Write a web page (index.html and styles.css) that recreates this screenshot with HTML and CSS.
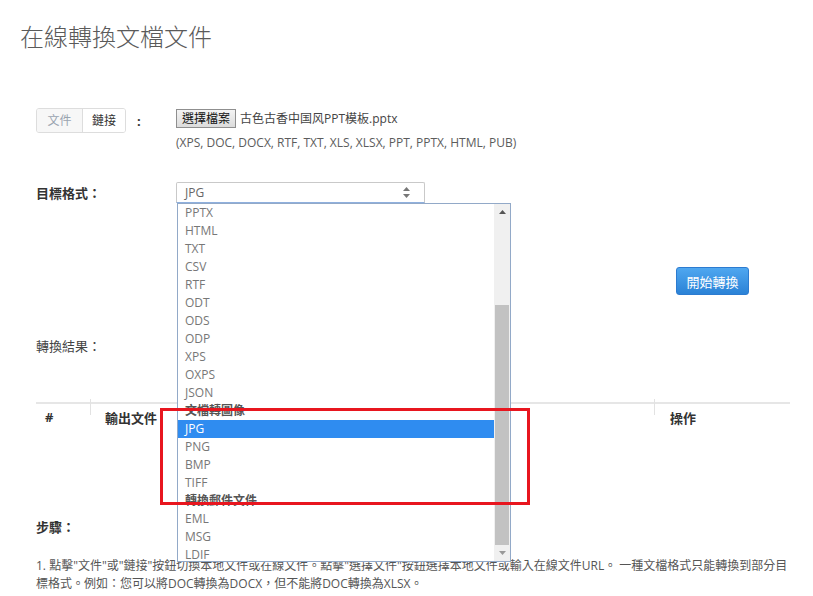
FILE: index.html
```html
<!DOCTYPE html>
<html lang="zh-Hant">

<head>
  <meta charset="UTF-8">
  <meta name="viewport" content="width=device-width, initial-scale=1.0">
  <title>在線轉換文檔文件</title>
  <link rel="stylesheet" href="styles.css">
</head>

<body>
  <h1 class="page-title">在線轉換文檔文件</h1>

  <div class="converter">
    <div class="form-row source-row">
      <div class="label-col">
        <div class="tabs">
          <span class="tab active">文件</span>
          <span class="tab">鏈接</span>
        </div>
        <span class="colon">:</span>
      </div>
      <div class="field-col">
        <div class="file-line">
          <span class="file-btn">選擇檔案</span>
          <span class="file-name">古色古香中国风PPT模板.pptx</span>
        </div>
        <div class="hint">(XPS, DOC, DOCX, RTF, TXT, XLS, XLSX, PPT, PPTX, HTML, PUB)</div>
      </div>
    </div>

    <div class="form-row target-row">
      <div class="label-col">
        <span class="label">目標格式：</span>
      </div>
      <div class="field-col">
        <div class="select-wrap">
          <div class="select-box">
            <span>JPG</span>
            <svg class="select-arrows" width="7" height="11" viewBox="0 0 7 11">
              <path d="M3.5 0 L7 4 L0 4 Z M3.5 11 L7 7 L0 7 Z" fill="#777" />
            </svg>
          </div>

          <!-- open option list of the select -->
          <div class="dropdown">
            <ul class="options">
              <li>PPTX</li>
              <li>HTML</li>
              <li>TXT</li>
              <li>CSV</li>
              <li>RTF</li>
              <li>ODT</li>
              <li>ODS</li>
              <li>ODP</li>
              <li>XPS</li>
              <li>OXPS</li>
              <li>JSON</li>
              <li class="group">文檔轉圖像</li>
              <li class="selected">JPG</li>
              <li>PNG</li>
              <li>BMP</li>
              <li>TIFF</li>
              <li class="group">轉換郵件文件</li>
              <li>EML</li>
              <li>MSG</li>
              <li>LDIF</li>
            </ul>
            <div class="scrollbar">
              <div class="scroll-btn">
                <svg width="7" height="4" viewBox="0 0 7 4"><path d="M3.5 0 L7 4 L0 4 Z" fill="#555" /></svg>
              </div>
              <div class="scroll-track">
                <div class="scroll-thumb"></div>
              </div>
              <div class="scroll-btn">
                <svg width="7" height="4" viewBox="0 0 7 4"><path d="M0 0 L7 0 L3.5 4 Z" fill="#999" /></svg>
              </div>
            </div>
          </div>

          <div class="highlight"></div>
        </div>
      </div>
    </div>

    <div class="action-row">
      <button class="start-btn">開始轉換</button>
    </div>

    <div class="result-label">轉換結果：</div>

    <table class="result-table">
      <thead>
        <tr>
          <th class="col-num">#</th>
          <th class="col-file">輸出文件</th>
          <th class="col-op">操作</th>
        </tr>
      </thead>
    </table>

    <div class="steps-title">步驟：</div>
    <p class="steps">1. 點擊"文件"或"鏈接"按鈕切換本地文件或在線文件。點擊"選擇文件"按鈕選擇本地文件或輸入在線文件URL。 一種文檔格式只能轉換到部分目標格式。例如：您可以將DOC轉換為DOCX，但不能將DOC轉換為XLSX。</p>
  </div>
</body>

</html>
```

FILE: styles.css
```css
body {
  font-family: 'Open Sans', 'Noto Sans CJK TC', sans-serif;
  margin: 0;
  padding: 0;
  background-color: #fff;
  color: #555;
  font-size: 12px;
}

.page-title {
  margin: 0;
  padding: 20px 20px 0;
  font-size: 24px;
  line-height: 34px;
  font-weight: 300;
  color: #5a5a5a;
}

.converter {
  padding: 54px 23px 0 36px;
}

.form-row {
  display: flex;
  align-items: flex-start;
}

.label-col {
  width: 140px;
  display: flex;
  align-items: center;
}

.field-col {
  flex: 1;
}

/* source tabs */
.tabs {
  display: flex;
  border: 1px solid #ddd;
  border-radius: 3px;
  height: 23px;
  overflow: hidden;
}

.tab {
  width: 42px;
  line-height: 23px;
  text-align: center;
  color: #333;
  background-color: #fff;
}

.tab.active {
  width: 45px;
  color: #9aa4b0;
  background-color: #f7f7f7;
  border-right: 1px solid #ddd;
}

.colon {
  margin-left: 11px;
  font-size: 13px;
  font-weight: bold;
  color: #333;
}

.file-line {
  display: flex;
  align-items: center;
  height: 20px;
}

.file-btn {
  display: inline-block;
  height: 17px;
  line-height: 17px;
  padding: 0 5px;
  border: 1px solid #8f8f8f;
  background: linear-gradient(#f4f4f4, #dcdcdc);
  color: #111;
  font-size: 12px;
}

.file-name {
  margin-left: 4px;
  color: #444;
}

.hint {
  margin-top: 6px;
  line-height: 18px;
  color: #5c5c5c;
}

/* target format */
.target-row {
  margin-top: 30px;
}

.target-row .label-col {
  height: 21px;
}

.label {
  font-size: 13px;
  font-weight: bold;
  color: #333;
}

.select-wrap {
  position: relative;
  width: 249px;
}

.select-box {
  height: 19px;
  border: 1px solid #c9c9c9;
  border-bottom-color: #8fb0de;
  border-radius: 2px 2px 0 0;
  display: flex;
  align-items: center;
  justify-content: space-between;
  padding: 0 14px 0 8px;
  color: #666;
}

.dropdown {
  position: absolute;
  top: 21px;
  left: 1px;
  width: 332px;
  height: 357px;
  border: 1px solid #92a9c8;
  background-color: #fff;
  display: flex;
  z-index: 5;
}

.options {
  list-style: none;
  margin: 0;
  padding: 0;
  flex: 1;
  overflow: hidden;
}

.options li {
  height: 18px;
  line-height: 18px;
  padding-left: 7px;
  color: #777;
}

.options li.group {
  font-weight: bold;
  color: #555;
}

.options li.selected {
  background-color: #2f8cf0;
  color: #fff;
}

.scrollbar {
  width: 16px;
  background-color: #f0f0f0;
  display: flex;
  flex-direction: column;
}

.scroll-btn {
  height: 17px;
  display: flex;
  align-items: center;
  justify-content: center;
}

.scroll-track {
  flex: 1;
  padding-top: 85px;
}

.scroll-thumb {
  height: 240px;
  margin: 0 1px;
  background-color: #c2c2c2;
}

.highlight {
  position: absolute;
  top: 226px;
  left: -16px;
  width: 364px;
  height: 91px;
  border: 3px solid #e8161f;
  z-index: 6;
}

/* convert button */
.action-row {
  display: flex;
  justify-content: flex-end;
  padding-right: 41px;
  margin-top: 64px;
}

.start-btn {
  width: 73px;
  height: 28px;
  border: 1px solid #2c7bd0;
  border-radius: 3px;
  background: linear-gradient(#4fa7f0, #2b82d6);
  color: #fff;
  font-family: 'Noto Sans CJK TC', sans-serif;
  font-size: 13px;
  padding: 0;
}

.result-label {
  margin-top: 42px;
  font-size: 13px;
  line-height: 18px;
  color: #444;
}

.result-table {
  width: 100%;
  margin-top: 47px;
  border-collapse: collapse;
  border-top: 2px solid #e6e6e6;
}

.result-table th {
  position: relative;
  height: 26px;
  padding: 0;
  text-align: left;
  font-size: 13px;
  font-weight: bold;
  color: #333;
}

.result-table th + th::before {
  content: '';
  position: absolute;
  left: 0;
  top: -5px;
  height: 16px;
  border-left: 1px solid #e2e2e2;
}

.col-num {
  width: 45px;
  padding-left: 9px !important;
}

.col-file {
  padding-left: 15px !important;
}

.col-op {
  width: 120px;
  padding-left: 16px !important;
}

.steps-title {
  margin-top: 88px;
  font-size: 13px;
  font-weight: bold;
  line-height: 18px;
  color: #333;
}

.steps {
  margin: 21px 0 0;
  line-height: 18px;
  color: #555;
}
```
